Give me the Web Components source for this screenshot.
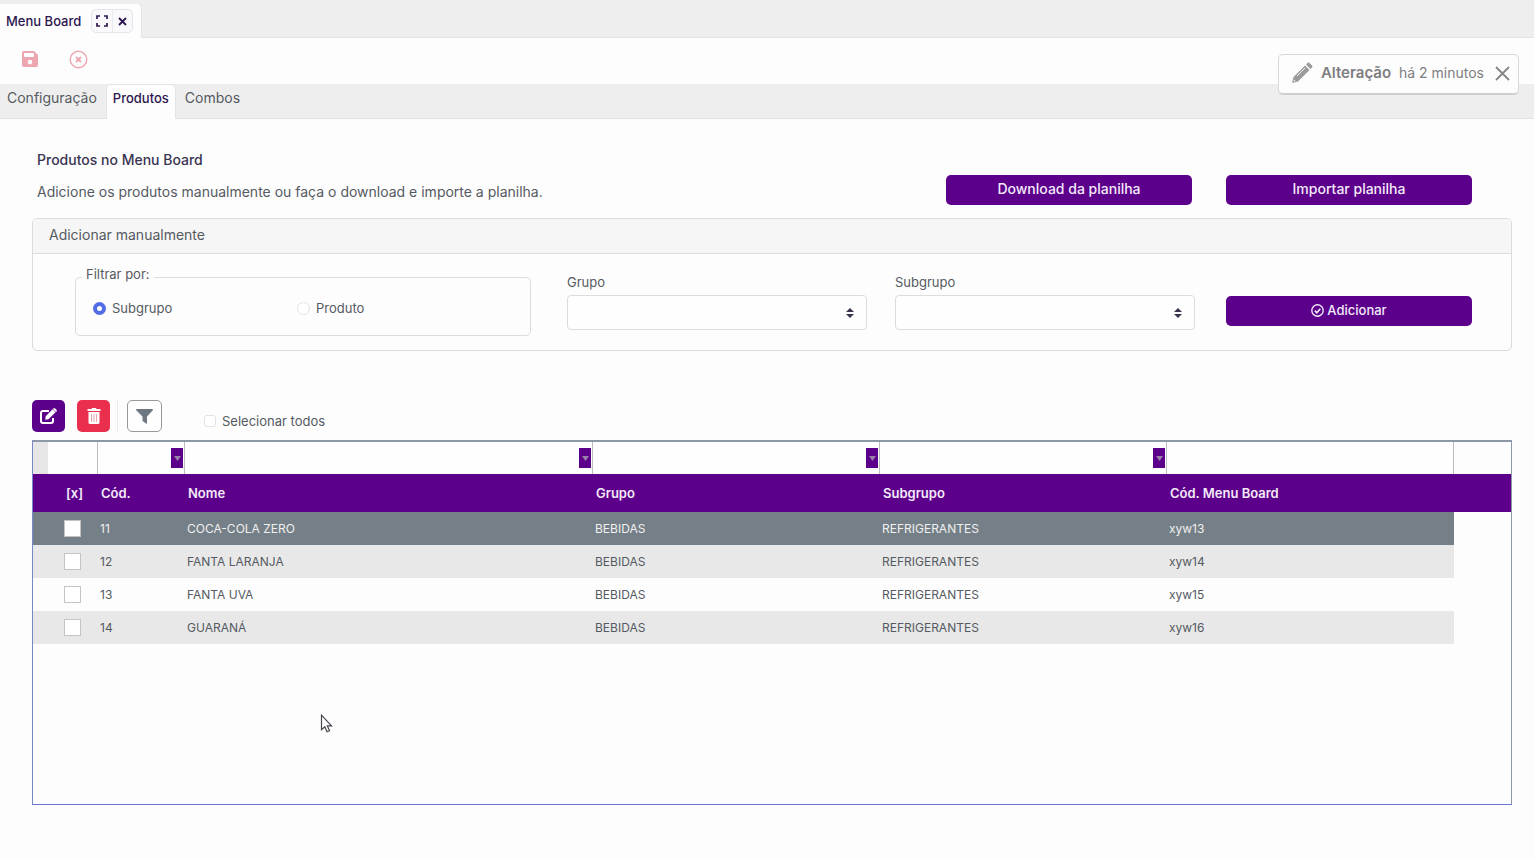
<!DOCTYPE html>
<html lang="pt-BR">
<head>
<meta charset="utf-8">
<title>Menu Board</title>
<meta name="viewport" content="width=device-width, initial-scale=1">
<style>
  :root {
    --purple: #5c008c;
    --red: #e92f4d;
    --slate: #757f87;
    --text: #555a62;
    --ink: #3a3350;
    --line: #dcdcde;
    --bar: #eeeeee;
    --paper: #fdfdfd;
  }
  body {
    margin: 0;
    background: var(--paper);
    color: var(--text);
    font: 13px/20px Inter, "Open Sans", sans-serif;
  }
</style>
</head>
<body>
<menu-board-page></menu-board-page>

<script>
const define = (name, html, setup) => {
  const template = document.createElement('template');
  template.innerHTML = `<style>
    *, *::before, *::after { box-sizing: border-box; }
    button, input, select { font: inherit; color: inherit; margin: 0; }
    button { cursor: pointer; }
    svg { display: block; }
  </style>` + html;
  customElements.define(name, class extends HTMLElement {
    constructor() {
      super();
      this.attachShadow({ mode: 'open' }).append(template.content.cloneNode(true));
    }
    connectedCallback() { if (setup) setup(this.shadowRoot, this); }
  });
};

/* Strip of open windows */
define('window-tabs', `
  <style>
    :host { display: flex; align-items: flex-end; height: 38px; background: var(--bar); border-bottom: 1px solid #e4e4e4; }
    .tab { display: flex; align-items: center; gap: 10px; height: 34px; padding: 0 8px 0 6px; margin-bottom: -1px;
           background: var(--paper); border-right: 1px solid #e4e4e4; border-radius: 0 5px 0 0; color: #2c1750; font-weight: 500; }
    .tools { display: flex; border: 1px solid #e3e5ea; border-radius: 5px; background: #f9f9fb; }
    button { display: grid; place-items: center; width: 20px; height: 22px; padding: 0; border: 0; background: none; }
    button + button { border-left: 1px solid #e8eaee; }
  </style>
  <div class="tab">
    <span>Menu Board</span>
    <div class="tools">
      <button aria-label="Expandir"><svg width="12" height="12" viewBox="0 0 12 12" fill="none" stroke="currentColor" stroke-width="1.700"><path d="M1 4V1h3M8 1h3v3M11 8v3H8M4 11H1V8"/></svg></button>
      <button aria-label="Fechar"><svg width="9" height="9" viewBox="0 0 9 9" fill="none" stroke="currentColor" stroke-width="1.800"><path d="M1 1l7 7M8 1L1 8"/></svg></button>
    </div>
  </div>
`);

/* Save and cancel actions, both inactive */
define('action-bar', `
  <style>
    :host { display: flex; align-items: center; gap: 30px; height: 46px; padding: 0 20px 4px; }
    button { display: grid; place-items: center; width: 19px; height: 20px; padding: 0; border: 0; background: none; color: #eda5b0; }
  </style>
  <button aria-label="Salvar" disabled><svg width="16" height="16" viewBox="0 0 16 16" fill="currentColor"><path fill-rule="evenodd" d="M2 0h10l4 4v10a2 2 0 0 1-2 2H2a2 2 0 0 1-2-2V2a2 2 0 0 1 2-2zM3 2a1 1 0 0 0-1 1v2a1 1 0 0 0 1 1h8a1 1 0 0 0 1-1V3a1 1 0 0 0-1-1zM8 8.800a2.300 2.300 0 1 0 0 4.600 2.300 2.300 0 0 0 0-4.600z"/></svg></button>
  <button aria-label="Cancelar" disabled><svg width="19" height="19" viewBox="0 0 19 19" fill="none" stroke="currentColor" stroke-width="1.400"><circle cx="9.500" cy="9.500" r="8.300"/><path stroke-width="1.800" d="M7 7l5 5M12 7l-5 5"/></svg></button>
`);

define('page-tabs', `
  <style>
    :host { display: block; }
    nav { display: flex; height: 35px; background: var(--bar); border-bottom: 1px solid #e2e2e2; font-size: 14px; }
    a { padding: 3px 8px 0; color: var(--text); text-decoration: none; border: 1px solid transparent; border-bottom: 0; }
    a:first-child { padding-left: 6px; }
    a[aria-current] { padding: 3px 6px 0; margin-bottom: -1px; background: var(--paper); border-color: #e4e4e4; border-radius: 5px 5px 0 0; color: #2c1750; font-size: 13px; font-weight: 500; }
  </style>
  <nav><a href="#configuracao">Configuração</a><a href="#produtos" aria-current="page">Produtos</a><a href="#combos">Combos</a></nav>
`);

define('change-notice', `
  <style>
    :host { position: absolute; top: 54px; right: 15px; display: flex; align-items: center; gap: 8px; height: 41px; padding: 0 8px 2px 12px;
            background: var(--paper); border: 1px solid #d8d8d8; border-bottom: 2px solid #cfcfcf; border-radius: 5px; color: #7e7e80; font-size: 14px; }
    strong { font-size: 15px; font-weight: 600; }
    button { padding: 0; margin-left: 3px; border: 0; background: none; }
  </style>
  <svg width="22" height="22" viewBox="0 0 22 22"><path fill="#9b9b9b" d="M1 21l1.500-6L14 3.500 18.500 8 7 19.500zM15 2.500l1.500-1.500c.6-.6 1.400-.6 2 0L21 3.500c.6.6.6 1.400 0 2L19.500 7z"/><path stroke="#f4f4f4" d="M6 14l8-8" fill="none"/><path fill="#fff" d="M2.500 19.500l.6-2 1.400 1.400z"/></svg>
  <strong>Alteração</strong><span>há 2 minutos</span>
  <button aria-label="Fechar aviso"><svg width="15" height="15" viewBox="0 0 15 15" fill="none" stroke="#858585" stroke-width="1.800"><path d="M1 1l13 13M14 1L1 14"/></svg></button>
`);

define('primary-button', `
  <style>
    :host { display: block; }
    button { display: flex; align-items: center; justify-content: center; gap: 3px; width: 100%; height: 30px; padding: 0 8px 2px; border: 0; border-radius: 5px;
             background: var(--purple); color: #f3eaf8; font-weight: 500; }
  </style>
  <button><slot name="icon"></slot><slot></slot></button>
`);

define('page-heading', `
  <style>
    :host { display: grid; grid-template-columns: 1fr 246px 246px; column-gap: 34px; padding: 0 40px 0 5px; font-size: 14px; }
    h1 { margin: 0 0 12px; font-size: 14px; line-height: 20px; font-weight: 500; color: var(--ink); }
    p { margin: 0; }
    primary-button { align-self: end; margin-bottom: -3px; }
  </style>
  <div><h1>Produtos no Menu Board</h1><p>Adicione os produtos manualmente ou faça o download e importe a planilha.</p></div>
  <primary-button>Download da planilha</primary-button>
  <primary-button>Importar planilha</primary-button>
`);

define('section-card', `
  <style>
    :host { display: block; border: 1px solid var(--line); border-radius: 5px; }
    header { height: 35px; padding: 6px 16px; background: #f6f6f6; border-bottom: 1px solid var(--line); border-radius: 4px 4px 0 0; font-size: 14px; }
  </style>
  <header><slot name="title"></slot></header>
  <slot></slot>
`);

define('filter-choice', `
  <style>
    :host { display: block; padding-right: 8px; }
    fieldset { display: grid; grid-template-columns: 204px 1fr; height: 72px; margin: 0; padding: 8px 17px 0; border: 1px solid var(--line); border-radius: 5px; min-width: 0; }
    legend { padding: 0 4px 6px; margin-left: -11px; line-height: 20px; }
    label { display: flex; align-items: center; gap: 6px; height: 20px; }
    input { appearance: none; width: 13px; height: 13px; border: 1px solid #e2e2e2; border-radius: 50%; background: #fff; }
    input:checked { border: 4px solid #526be6; }
  </style>
  <fieldset>
    <legend>Filtrar por:</legend>
    <label><input type="radio" name="filtro" checked>Subgrupo</label>
    <label><input type="radio" name="filtro">Produto</label>
  </fieldset>
`);

define('select-field', `
  <style>
    :host { display: block; }
    label { display: block; height: 23px; }
    .box { display: grid; align-items: center; }
    select, svg { grid-area: 1 / 1; }
    select { appearance: none; width: 100%; height: 35px; padding: 0 32px 0 12px; border: 1px solid var(--line); border-radius: 4px; background: #fefefe; }
    svg { justify-self: end; margin-right: 13px; pointer-events: none; }
  </style>
  <label for="field"></label>
  <div class="box">
    <select id="field"><option></option></select>
    <svg width="8" height="10" viewBox="0 0 8 10" fill="#3d3250"><path d="M4 0l4 4H0zM4 10L0 6h8z"/></svg>
  </div>
`, (root, host) => { root.querySelector('label').textContent = host.getAttribute('label'); });

define('manual-form', `
  <style>
    form { display: grid; grid-template-columns: 464fr 300fr 303fr 246fr; column-gap: 28px; padding: 10px 39px 14px 42px; }
    select-field { padding-top: 8px; }
    select-field + select-field { margin-right: 3px; }
    primary-button { padding-top: 32px; }
  </style>
  <section-card>
    <span slot="title">Adicionar manualmente</span>
    <form>
      <filter-choice></filter-choice>
      <select-field label="Grupo"></select-field>
      <select-field label="Subgrupo"></select-field>
      <primary-button><svg slot="icon" width="13" height="13" viewBox="0 0 13 13" fill="none" stroke="currentColor" stroke-width="1.400"><circle cx="6.500" cy="6.500" r="5.700"/><path stroke-width="1.700" d="M3.800 6.700l2 2 3.500-4"/></svg>Adicionar</primary-button>
    </form>
  </section-card>
`);

define('grid-actions', `
  <style>
    :host { display: flex; align-items: center; height: 32px; }
    button { display: grid; place-items: center; width: 33px; height: 32px; padding: 0; border: 0; border-radius: 5px; color: #fff; }
    .edit { background: var(--purple); margin-right: 12px; }
    .trash { background: var(--red); }
    .funnel { width: 35px; border: 1px solid #94999e; background: #fefefe; color: #6f7880; }
    hr { width: 1px; height: 32px; margin: 0 9px 0 7px; border: 0; background: #ececec; }
    label { display: flex; align-items: center; gap: 6px; margin: 10px 0 0 42px; }
    input { appearance: none; width: 12px; height: 12px; border: 1px solid #e2e2e2; border-radius: 3px; background: #fff; }
  </style>
  <button class="edit" aria-label="Editar"><svg width="17" height="16" viewBox="0 0 17 16" fill="none" stroke="currentColor" stroke-width="2"><path d="M9 3H3a2 2 0 0 0-2 2v8a2 2 0 0 0 2 2h8a2 2 0 0 0 2-2v-3"/><path fill="currentColor" stroke="none" d="M12.600 1.200l3 3L8.500 11.200 5.200 11.700 5.700 8.200zM13.300.6c.6-.6 1.300-.6 1.900 0l1.200 1.200c.6.6.6 1.300 0 1.900l-.4.400-3.100-3.100z"/></svg></button>
  <button class="trash" aria-label="Excluir"><svg width="14" height="16" viewBox="0 0 14 16" fill="currentColor"><path d="M5 0h4l.6 1H13.500v2H.5V1H4.400zM1.500 4h11v10.500a1.500 1.500 0 0 1-1.500 1.500H3a1.500 1.500 0 0 1-1.500-1.500z"/><path stroke="#eba3b0" d="M4.500 6v8M7 6v8M9.500 6v8"/></svg></button>
  <hr>
  <button class="funnel" aria-label="Filtrar"><svg width="17" height="15" viewBox="0 0 17 15" fill="currentColor"><path d="M.8 0h15.400c.8 0 1 .8.6 1.300L11 7.500V15L6.500 12V7.500L.2 1.300C-.2.800 0 0 .8 0z"/></svg></button>
  <label><input type="checkbox">Selecionar todos</label>
`);

define('column-filter', `
  <style>
    :host { display: flex; align-items: center; height: 100%; padding-right: 1px; }
    input { flex: 1; min-width: 0; height: 100%; padding: 0 4px; border: 0; outline: 0; background: none; }
    button { display: grid; place-items: center; width: 12px; height: 20px; padding: 0; border: 0; background: var(--purple); }
    :host([plain]) button { display: none; }
  </style>
  <input type="text">
  <button aria-label="Tipo de filtro"><svg width="7" height="5" viewBox="0 0 7 5" fill="#9a80a8"><path d="M0 0h7L3.500 5z"/></svg></button>
`, (root, host) => { root.querySelector('input').setAttribute('aria-label', 'Filtrar ' + host.getAttribute('for')); });

define('product-grid', `
  <style>
    :host { display: block; min-height: 365px; border: 1px solid #8c97a8; border-left-color: #7887c8; border-bottom-color: #6675d6; border-top-width: 2px; }
    table, thead, tbody { display: block; }
    tr { display: grid; grid-template-columns: 65px 87px 408fr 287fr 287fr 287fr 57px; }
    th, td { display: block; min-width: 0; padding: 0; text-align: left; font-weight: 400; }
    .filters { height: 32px; }
    .filters td { border-right: 1px solid #bdbdbd; background: #fefefe; }
    .filters td:first-child { border-left: 15px solid #e6e6e6; }
    .filters td:last-child { border: 0; background: none; }
    .titles { height: 38px; align-items: center; background: var(--purple); color: #f3eaf8; }
    .titles th { padding: 0 0 0 3px; font-weight: 600; }
    .titles th:first-child { padding-left: 33px; }
    tbody tr { height: 33px; }
    tbody td { height: 33px; padding: 7px 0 6px 2px; font-size: 12px; }
    tbody td:first-child { padding: 8px 0 0 31px; }
    tbody tr:nth-child(even) td:not(:last-child) { background: #e8e8e8; }
    tbody tr.current td:not(:last-child) { background: var(--slate); color: #f0f0f0; }
    input { display: block; appearance: none; width: 17px; height: 17px; border: 1px solid #c4c4c4; background: #fff; }
  </style>
  <table>
    <thead>
      <tr class="filters">
        <td></td>
        <td><column-filter for="código"></column-filter></td>
        <td><column-filter for="nome"></column-filter></td>
        <td><column-filter for="grupo"></column-filter></td>
        <td><column-filter for="subgrupo"></column-filter></td>
        <td><column-filter for="código no Menu Board" plain></column-filter></td>
        <td></td>
      </tr>
      <tr class="titles"><th>[x]</th><th>Cód.</th><th>Nome</th><th>Grupo</th><th>Subgrupo</th><th>Cód. Menu Board</th><th></th></tr>
    </thead>
    <tbody></tbody>
  </table>
`, root => {
  const products = [
    ['11', 'COCA-COLA ZERO', 'BEBIDAS', 'REFRIGERANTES', 'xyw13'],
    ['12', 'FANTA LARANJA', 'BEBIDAS', 'REFRIGERANTES', 'xyw14'],
    ['13', 'FANTA UVA', 'BEBIDAS', 'REFRIGERANTES', 'xyw15'],
    ['14', 'GUARANÁ', 'BEBIDAS', 'REFRIGERANTES', 'xyw16']
  ];
  root.querySelector('tbody').innerHTML = products.map((cells, i) =>
    `<tr${i === 0 ? ' class="current"' : ''}><td><input type="checkbox" aria-label="Selecionar ${cells[1]}"></td>${cells.map(c => `<td>${c}</td>`).join('')}<td></td></tr>`
  ).join('');
});

define('mouse-pointer', `
  <style>:host { position: absolute; left: 320px; top: 714px; pointer-events: none; }</style>
  <svg width="13" height="19" viewBox="0 0 13 19"><path fill="#fff" stroke="#45454d" stroke-width="1.200" d="M1.500 1.200v14.500l3.300-3 2.200 5 2.500-1.100-2.200-4.800h4.200z"/></svg>
`);

define('menu-board-page', `
  <style>
    :host { display: block; }
    main { padding: 31px 22px 24px 32px; }
    manual-form { display: block; margin-top: 16px; }
    grid-actions { margin: 49px 0 8px; }
  </style>
  <window-tabs></window-tabs>
  <action-bar></action-bar>
  <page-tabs></page-tabs>
  <change-notice></change-notice>
  <main>
    <page-heading></page-heading>
    <manual-form></manual-form>
    <grid-actions></grid-actions>
    <product-grid></product-grid>
  </main>
  <mouse-pointer></mouse-pointer>
`);
</script>
</body>
</html>
